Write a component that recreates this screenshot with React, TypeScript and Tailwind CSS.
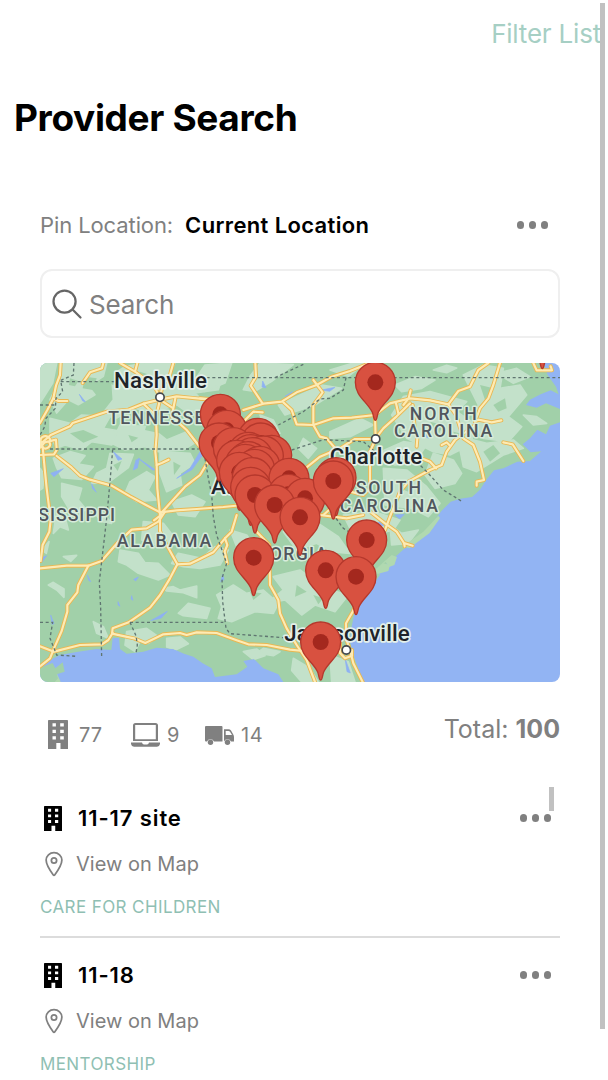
import { IoLocationOutline, IoSearchOutline } from "react-icons/io5";

type Point = [number, number];

const LIGHT_PATCHES = [
  "M30 24h50l-12 60l-25 40l-13 20z",
  "M95 24h135l-10 40l-45 30l20 25l-50 30l-30-15l-35 40l-20-40l25-50z",
  "M245 60l40-25l60-11h90l-20 40l70 20l95-30l-15 50l-70 10l40 40l-60 20l-35-25l-70 25l-60-15l-50 30l-45-10l35-45z",
  "M60 190l60 15l35-25l85 5l-20 35l60 10l-35 40l-60-10l-30 25l-50-15l-25 10l-20-40z",
  "M270 210l90 5l50 40l60-25l30 30l-40 25l-75 5l-40-15l-60 10l-40-20z",
  "M70 310l50-20l45 12l-20 25l45 8l-35 38l-60-5l-15-30z",
  "M240 295l70 3l-15 40l-60 45l-50 2l15-30l30-15z",
  "M300 380l50-30l25 15l-20 40l25 30l-60 5l-35-25z",
  "M390 290l90 5l15 30l-45 30l5 35l-45 20l-20-55z",
  "M95 385l60 15l-10 35l25 30l-45 10l-30-50z",
  "M30 340l14 20l-6 40l-8 5z",
  "M80 470l25 15l10 40l-25-10l-20 20z",
  "M190 470l30 5l25 30l-30-5z",
  "M425 440l60-20l40 20l-30 45l-50-5z",
  "M270 585l55 10l20 28l40 2l35 35l-35 15l-60-20l-35-25l-25-10z",
  "M340 500l60 5l35 45l-40 25l-60-20z",
  "M425 625l20-30l70 15l40-35l40 10l-25 45l-60 10l-50-5z",
  "M400 700l30-5l20 10l50-12v35l-40-15l-50-5z",
  "M445 775l30-30l65 15l-10 30l-70-8z",
  "M55 690l15-8l32 20v25l-22-22z",
  "M35 585l22-25l-8 35z",
  "M100 605l40-4l-18 18z",
  "M190 800l30 15l15 35l-35-15z",
  "M290 830l60-10l35 25l-30 20l-25-5l-15 30l-30-20z",
  "M410 850l40-4l25 20l-40 20l-25-10z",
  "M560 720l50-30l40 25l50-10l45 40l-15 30l-55-5l-70 30l-40-10l10-35z",
  "M730 665l80-20l75 55l70 20l-40 50l-60-20l-40 30l-50-45l-55 10l50-40z",
  "M760 530l60 5l45-30l60 40l35 50l-60-5l-40-25l-60 20z",
  "M600 525l50 15l30 40l-60-5z",
  "M525 30l80-6l-20 60l-60 25l-30-35z",
  "M690 24l100 5l-65 50l-50 30l-35-5l20-40z",
  "M745 150l130-60l60 10l-80 50l-90 30z",
  "M900 230l90-40l40 20l-70 35l-60 5z",
  "M690 180l40 15l20 40l-45-15z",
  "M820 250l40 30l-25 30l-30-30z",
  "M900 45l70-21h35l-50 40z",
  "M1030 300l90-40l70 10l-35 50l-60 10z",
  "M1095 90l60-25l60 10l-40 25l-60 10z",
  "M1210 45l40-14l30 8l-30 14z",
  "M1120 125l80-15l110 30l-30 30l60 40l-20 60l-60 30l-50-10l-80-40l-45-70z",
  "M1300 60l60-30l60 10l-10 60l60-10l20 30l-55 65l40 30l-40 45l-75-10l-35-45l20-55z",
  "M1310 250l60 15l80-10l30 25l-60 20l-80 50l-40-15l-10-50z",
  "M1210 295l60 20l25 40l-20 30l-60 15l-30-40z",
  "M1060 340l70 5l60 50l40 50l-35 40l-50-25l-80-10z",
  "M1400 55l60-15l40 25l-50 20z",
  "M1480 180l40 5l30 20l-40 5z",
  "M940 480l90-10l80 25l-20 30l-60 15l-70-20z",
  "M1080 510l35 25l50-10l-30 40l-50 5z",
  "M700 880l50 10l-20 12l-50-8z",
  "M640 890l40-8l25 20l-35 12z",
  "M790 910l50 30l25 41h-50l-30-35z",
  "M900 900l55 20l20 61h-70z",
];

const DARK_PATCHES = [
  "M165 65l35 5l-12 35l-30-5z",
  "M240 30l20 20l-10 40l-22-10z",
  "M120 70l25 8l-10 16l-18-4z",
  "M330 50l30 10l-20 25l-18-10z",
  "M360 180l60 20l-30 35l-45-10z",
  "M120 235l40-10l45 20l-45 18z",
  "M295 240l30 8l-20 14z",
  "M430 320l22 12l-20 28z",
  "M250 330l25-12l-12 30z",
  "M1350 90l40 10l-25 35z",
  "M1200 200l40 10l-15 30z",
  "M1270 230l30 8l-22 16z",
  "M1390 150l35-20l5 30l-25 10z",
  "M1360 290l30-20l20 25l-30 25z",
  "M1110 380l35 5l-10 25l-25-10z",
  "M660 710l35 5l-25 20z",
  "M800 690l30 20l-35 15z",
  "M850 720l30 10l-15 18z",
];

const COAST_TINTS = [
  "M1180 530l45-48l5 8l-32 45l-60 45l-20-6z",
  "M1040 640l45-40l16 6l-8 24l-16 6l-10-15z",
  "M1020 655l40-30l20 5l-5 18l-30 8z",
  "M40 965l15-18l25 8l12 25l-25 12z",
];

const LAND =
  "M30 24H1540L1553 60L1578 95L1586 118L1562 106L1532 118L1500 134L1488 150L1520 158L1548 145L1590 162V202L1560 212L1548 238L1522 224L1500 250L1478 268L1502 292L1534 289L1500 318L1462 320L1420 340L1392 346L1368 376L1350 404L1326 426L1290 431L1262 440L1234 468L1215 495L1230 484L1208 520L1165 546L1122 582L1095 606L1070 626L1040 640L1050 660L1035 680L1000 714L975 765L964 820L960 860L974 912L1000 981H760L745 958L700 940L672 912L640 918L652 935L620 958L555 966L545 940L518 925L490 905L462 896L430 882L380 878L340 890L290 896L270 882L267 848L248 850L244 885L200 882L140 891L90 900L50 920L30 932Z";

const LAKES = [
  "M148 118l18 22l-8-2z", "M440 370l40-30l30-50l8 10l-32 44z",
  "M310 345l8-30l10-4l-6 28z", "M325 310l52 35l-10 0z",
  "M62 355l38-14l-28 24z", "M250 290l26 22l-12 4z",
  "M185 386l14 26l-12-12z", "M30 610l20-8l-14 20z",
  "M311 673l14-7l-8 12z", "M305 722l4 14l-6-4z",
  "M264 740l6 14l-6-4z", "M362 797l50-28l-18 20z",
  "M172 660l10 20l-6-4z", "M62 780l4 28l6-2z",
  "M1052 495l18 18l-30-4z", "M1095 480l28-2l-14 14z",
  "M945 910l16 44l-10-4z", "M698 78l10 20l-12-2z",
  "M765 124l22-14l-8 20z", "M1188 228l8 22l-8-4z",
  "M572 680l6-22l4 16z", "M875 105l40-8l-16 12z",
];

const ROADS = [
  "M92 24L90 60L78 92L70 130L52 165L30 204",
  "M70 130L85 138L112 138",
  "M158 84L180 52L216 40L220 24",
  "M270 24L315 50L322 24M315 50L372 92L390 127",
  "M430 24L418 66L398 90L390 127",
  "M30 268L62 240L120 214L128 204L230 170L295 164L340 146L390 134L440 124L480 128L540 134",
  "M34 262A14 12 0 1 0 58 262A14 12 0 1 0 34 262M30 278L44 262L78 254L80 285L72 298L30 300",
  "M38 275L44 340L50 400L55 440L62 495L58 530L38 570L32 618",
  "M80 303L125 338L150 362L180 374L245 392L300 424L348 450L390 472",
  "M390 134L378 185L380 240L376 290L380 330L382 400L390 480L390 528L410 570L442 628L420 670L390 720L360 758L296 802L248 820L246 836L312 850L346 864L400 838L450 834L470 840L500 832L560 834L620 856L655 868L710 870L780 884L820 888",
  "M340 146L376 180M390 134L430 160L436 130M430 160L425 185L470 225L505 270L540 310L510 360L465 395L390 478",
  "M380 330L395 324L416 314",
  "M390 472L440 466L500 462L580 456L640 450",
  "M372 496L396 478M405 470L385 500L350 520L305 524L260 566L215 618L175 632L110 632L30 640",
  "M175 632L145 690L142 712L112 750L112 770L95 828L72 880L60 910L30 934",
  "M30 874L72 890L150 870L216 868L235 855L248 834",
  "M442 628L480 626L505 614L550 592L585 550L605 530L620 480",
  "M585 550L592 570L584 590L592 625",
  "M510 130L560 134M640 165L700 146L755 140L800 112L860 90L905 65L960 48L1020 24",
  "M676 24L678 65L662 92L698 146",
  "M640 200L670 170L698 172",
  "M760 142L785 165L800 208L850 210L910 190L965 188L1035 180L1060 160L1080 145L1140 130L1200 136L1255 148L1285 108L1320 95L1345 45L1375 24",
  "M850 75L878 112L850 150L850 210L870 245L890 250L920 285",
  "M820 345L870 305L930 280L975 252L1035 252L1060 220L1100 184L1140 145",
  "M1035 180L1037 252L1020 290L1020 400L1000 420L960 410L880 480",
  "M1098 145L1105 175M1142 106L1136 130L1120 150",
  "M1148 150L1154 220L1162 250L1160 275",
  "M1410 24L1390 90L1375 130L1350 160L1335 200L1345 194L1385 202L1414 196",
  "M1255 148L1278 180L1300 250L1330 270L1350 320L1362 375L1340 380L1340 392",
  "M1335 210L1275 255L1250 290L1235 330L1200 345L1135 380L1110 410L1080 485L1065 525",
  "M1180 312L1200 320L1218 340M1235 270L1250 262L1258 270",
  "M1420 262L1448 268L1480 318",
  "M1510 24L1520 46L1566 46L1562 34",
  "M1020 470L1065 505L1100 530L1122 564L1148 572M1122 564L1124 574",
  "M870 480L950 490L1000 480",
  "M680 530L718 570L720 690L745 735L750 775L770 820L800 870L830 915L855 981",
  "M982 740L968 770L948 805L948 850L960 885L970 925L998 981",
  "M930 865L930 894L945 910L966 902L966 885",
];

const BORDERS = [
  "M132 24L130 60L92 76L98 110L78 130L76 160L48 190L44 215L30 240",
  "M92 80H260M30 150H75",
  "M530 68H1590",
  "M735 68L820 28",
  "M60 282H506M525 310L535 370L545 420L550 485L560 540L590 625L576 670L578 740L588 820L600 836L680 842L760 848",
  "M248 284L240 380L230 490L215 620L208 680L212 760L215 908",
  "M30 802H68L60 850L80 900L140 904",
  "M300 802H580M300 802L318 842L322 870L318 895",
  "M948 68L940 105L900 130L870 132L820 170L745 210",
  "M785 285L880 254L1000 260L1035 290",
  "M1160 320L1195 355L1240 405L1294 438",
  "M918 490L940 520L965 535L1000 580",
];

const PINS: Point[] = [
  [1537, -73], [1036, 82], [571, 178], [590, 226], [684, 250], [692, 264],
  [567, 264], [610, 278], [655, 292], [662, 299], [725, 301], [700, 303],
  [668, 308], [620, 316], [655, 320], [646, 328], [690, 334], [674, 343],
  [628, 352], [667, 368], [777, 370], [662, 397], [675, 420], [775, 418],
  [825, 430], [734, 450], [810, 487], [918, 368], [910, 378], [1010, 555],
  [671, 608], [887, 646], [978, 665], [872, 861],
];

function Region({ x, y, w, children }: { x: number; y: number; w: number; children: string }) {
  return (
    <text x={x} y={y} textLength={w} fontSize="53" fontWeight="500" fill="#50565d" stroke="#d7ecdb" strokeWidth="9" strokeLinejoin="round" paintOrder="stroke">
      {children}
    </text>
  );
}

function City({ x, y, w, children }: { x: number; y: number; w: number; children: string }) {
  return (
    <text x={x} y={y} textLength={w} fontSize="67" fontWeight="500" fill="#202329" stroke="#e3f0ea" strokeWidth="10" strokeLinejoin="round" paintOrder="stroke">
      {children}
    </text>
  );
}

function ProviderMap() {
  return (
    <svg viewBox="30 24 1560 957" className="block h-[319px] w-[520px] rounded-lg bg-[#92b4f3] font-['Roboto',sans-serif]">
      <defs>
        <clipPath id="land"><path d={LAND} /></clipPath>
      </defs>
      <path d={LAND} fill="#a1d0a9" />
      <g clipPath="url(#land)">
        {LIGHT_PATCHES.map((d) => <path key={d} d={d} fill="#c3e1ca" stroke="#c3e1ca" strokeWidth="5" strokeLinejoin="round" />)}
        {DARK_PATCHES.map((d) => <path key={d} d={d} fill="#a1d0a9" />)}
      </g>
      {COAST_TINTS.map((d) => <path key={d} d={d} fill="#b0d9b0" />)}
      <path d="M30 938L68 924L76 940L98 922L104 950L80 958L84 970L74 981H30Z" fill="#a1d0a9" />
      {LAKES.map((d) => <path key={d} d={d} fill="#8eb1f3" stroke="#8eb1f3" strokeWidth="2" />)}
      <g fill="none" strokeLinecap="round" strokeLinejoin="round">
        <g stroke="#e9b752" strokeWidth="12">{ROADS.map((d) => <path key={d} d={d} />)}</g>
        <g stroke="#fdebb4" strokeWidth="6.5">{ROADS.map((d) => <path key={d} d={d} />)}</g>
      </g>
      <g fill="none" stroke="#5f7570" strokeWidth="4" strokeDasharray="9 8">
        {BORDERS.map((d) => <path key={d} d={d} />)}
      </g>
      <Region x={235} y={208} w={322}>TENNESSEE</Region>
      <Region x={-78} y={497} w={333}>MISSISSIPPI</Region>
      <Region x={260} y={577} w={284}>ALABAMA</Region>
      <Region x={645} y={615} w={247}>GEORGIA</Region>
      <Region x={1139} y={194} w={201}>NORTH</Region>
      <Region x={1092} y={247} w={295}>CAROLINA</Region>
      <Region x={977} y={418} w={196}>SOUTH</Region>
      <Region x={929} y={472} w={295}>CAROLINA</Region>
      <City x={252} y={98} w={279}>Nashville</City>
      <City x={899} y={328} w={278}>Charlotte</City>
      <City x={543} y={418} w={210}>Atlanta</City>
      <City x={763} y={857} w={376}>Jacksonville</City>
      {[[390, 127], [1037, 252], [949, 885]].map(([x, y]) => (
        <circle key={x} cx={x} cy={y} r="12.5" fill="#fff" stroke="#44484c" strokeWidth="5" />
      ))}
      {PINS.map(([x, y]) => (
        <g key={`${x}-${y}`} transform={`translate(${x} ${y})`}>
          <path d="M0 114C-5 114-5 100-9 90C-24 58-60 42-60 0A60 60 0 1 1 60 0C60 42 24 58 9 90C5 100 5 114 0 114Z" fill="#d85140" stroke="#b5382c" strokeWidth="4" />
          <circle r="24" fill="#a4281e" />
        </g>
      ))}
    </svg>
  );
}

function Building({ className }: { className: string }) {
  return (
    <svg viewBox="0 0 20 29" preserveAspectRatio="none" fill="currentColor" className={className}>
      <path fillRule="evenodd" d="M.8 0H19.2Q20 0 20 .8V29H12.5V23H8.3V29H0V.8Q0 0 .8 0ZM4.5 3.3V6.6H7.9V3.3ZM12.2 3.3V6.6H15.8V3.3ZM4.5 9.8V13.1H7.9V9.8ZM12.2 9.8V13.1H15.8V9.8ZM4.5 16.3V19.6H7.9V16.3ZM12.2 16.3V19.6H15.8V16.3Z" />
    </svg>
  );
}

function Laptop() {
  return (
    <svg viewBox="0 0 29 24" fill="currentColor" className="h-6 w-[29px]">
      <path fillRule="evenodd" d="M4.5 0H24.5Q27 0 27 2.5V18H2V2.5Q2 0 4.5 0ZM4.2 2V16.2H24.8V2Z" />
      <path d="M0 19.5H11Q11.4 21.5 13 21.5H16Q17.6 21.5 18 19.5H29V21Q28.5 23.7 26 23.7H3Q.5 23.7 0 21Z" />
    </svg>
  );
}

function Truck() {
  return (
    <svg viewBox="0 0 29 19" fill="currentColor" className="h-[19px] w-[29px]">
      <path d="M1 0H16.5Q17.5 0 17.5 1V15.5H9A3.8 3.8 0 0 0 2 15.5H1Q0 15.5 0 14.5V1Q0 0 1 0Z" />
      <path fillRule="evenodd" d="M19 3.2H23.5Q25 3.2 26 4.6L28 8Q29 9.5 29 11V15.5H26A3.8 3.8 0 0 0 19 15.5ZM20.7 5V9H27L25 5.7Q24.5 5 23.5 5Z" />
      <circle cx="5.5" cy="16.2" r="2.7" />
      <circle cx="22.5" cy="16.2" r="2.7" />
    </svg>
  );
}

function More() {
  return (
    <span className="flex gap-[4.5px]">
      <i className="size-[7.5px] rounded-full bg-[#808080]" />
      <i className="size-[7.5px] rounded-full bg-[#808080]" />
      <i className="size-[7.5px] rounded-full bg-[#808080]" />
    </span>
  );
}

function Provider({ name, category }: { name: string; category: string }) {
  return (
    <article className="h-[157px] border-b-2 border-[#dcdcdc] pt-[21px]">
      <div className="flex h-8 items-center pl-[4px]">
        <Building className="h-[25px] w-[18px] text-black" />
        <h2 className="ml-4 text-[22px] font-semibold tracking-[0.9px]">{name}</h2>
        <div className="mr-[9px] ml-auto"><More /></div>
      </div>
      <div className="mt-[14px] flex h-8 items-center text-[#808080]">
        <IoLocationOutline className="size-[28px]" />
        <span className="ml-2 text-[20px]">View on Map</span>
      </div>
      <p className="mt-[15px] text-[17px] leading-6 tracking-[0.4px] text-[#8fbfb3]">{category}</p>
    </article>
  );
}

export default function App() {
  return (
    <main className="relative h-[1080px] w-[608px] overflow-hidden bg-white font-['Inter',sans-serif] text-black">
      <header className="flex h-[66px] items-center justify-end pr-[7px]">
        <a className="text-[26px] tracking-[-0.2px] text-[#a6cfc4]">Filter List</a>
      </header>
      <h1 className="flex h-[104px] items-center pl-[14px] text-[37px] font-bold tracking-[-0.35px]">Provider Search</h1>
      <section className="pr-12 pl-10">
        <div className="mt-[37px] flex h-9 items-center text-[22px]">
          <span className="tracking-[-0.1px] text-[#808080]">Pin Location:</span>
          <strong className="ml-[12px] font-semibold tracking-[0.36px]">Current Location</strong>
          <div className="mr-3 ml-auto"><More /></div>
        </div>
        <div className="mt-[26px] flex h-[69px] items-center rounded-xl border-2 border-[#efefef] pl-[7px]">
          <IoSearchOutline className="size-[36px] text-[#666]" />
          <span className="mt-[2px] ml-1 text-[26px] tracking-[-0.2px] text-[#808080]">Search</span>
        </div>
        <div className="mt-[25px]"><ProviderMap /></div>
        <div className="mt-[33px] flex h-10 items-center text-[20px] text-[#808080]">
          <Building className="mb-[2px] ml-[8px] h-[29px] w-5" />
          <span className="ml-[11px] w-[23px]">77</span>
          <span className="mb-[1px] ml-[29px]"><Laptop /></span>
          <span className="ml-[7px] w-[12px]">9</span>
          <span className="ml-[26px]"><Truck /></span>
          <span className="ml-[7px] tracking-[0.5px]">14</span>
          <span className="mb-[10px] ml-auto text-[25px]">Total: <b className="font-bold">100</b></span>
        </div>
        <div className="mt-[26px]">
          <Provider name="11-17 site" category="CARE FOR CHILDREN" />
          <Provider name="11-18" category="MENTORSHIP" />
        </div>
      </section>
      <div className="absolute top-[787px] left-[549px] h-6 w-[5px] bg-[#c1c1c1]" />
      <div className="absolute top-[3px] left-[600px] h-[1026px] w-[5px] bg-[#c1c1c1]" />
    </main>
  );
}
